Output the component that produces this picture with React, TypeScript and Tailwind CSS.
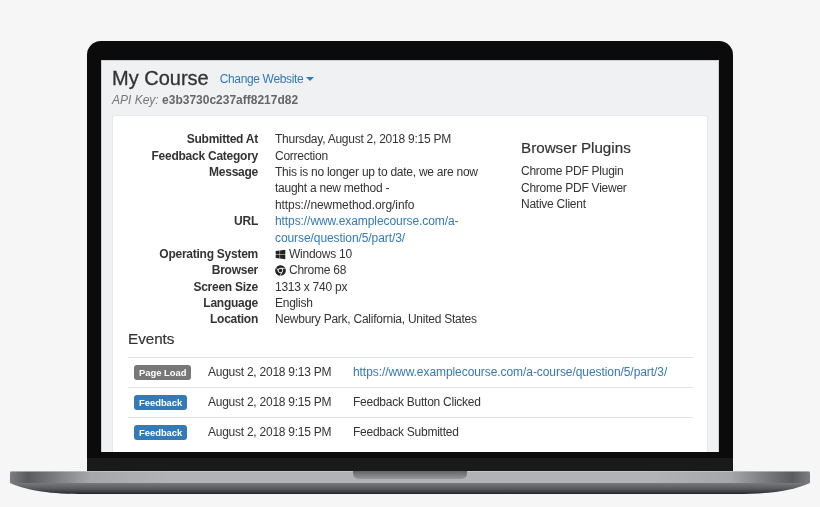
import { FaChrome, FaWindows } from 'react-icons/fa'

const details: { label: string; value: React.ReactNode }[] = [
  { label: 'Submitted At', value: 'Thursday, August 2, 2018 9:15 PM' },
  { label: 'Feedback Category', value: 'Correction' },
  {
    label: 'Message',
    value: (
      <>
        This is no longer up to date, we are now
        <br />
        taught a new method -
        <br />
        <span className="tracking-[-0.08px]">https://newmethod.org/info</span>
      </>
    ),
  },
  {
    label: 'URL',
    value: (
      <span className="tracking-[-0.08px] text-[#337ab7]">
        https://www.examplecourse.com/a-
        <br />
        course/question/5/part/3/
      </span>
    ),
  },
  {
    label: 'Operating System',
    value: (
      <span className="flex items-center gap-[3px]">
        <FaWindows className="h-[11px] w-[11px] text-[#222]" />
        Windows 10
      </span>
    ),
  },
  {
    label: 'Browser',
    value: (
      <span className="flex items-center gap-[3px]">
        <FaChrome className="h-[11px] w-[11px] text-[#222]" />
        Chrome 68
      </span>
    ),
  },
  { label: 'Screen Size', value: '1313 x 740 px' },
  { label: 'Language', value: 'English' },
  { label: 'Location', value: 'Newbury Park, California, United States' },
]

const events = [
  {
    badge: 'Page Load',
    color: 'bg-[#777777]',
    date: 'August 2, 2018 9:13 PM',
    text: <span className="tracking-[-0.07px] text-[#337ab7]">https://www.examplecourse.com/a-course/question/5/part/3/</span>,
  },
  { badge: 'Feedback', color: 'bg-[#337ab7]', date: 'August 2, 2018 9:15 PM', text: 'Feedback Button Clicked' },
  { badge: 'Feedback', color: 'bg-[#337ab7]', date: 'August 2, 2018 9:15 PM', text: 'Feedback Submitted' },
]

function LaptopBase() {
  return (
    <svg width="800" height="24" viewBox="0 0 800 24" className="block">
      <defs>
        <linearGradient id="lid" x1="0" x2="1" y1="0" y2="0">
          <stop offset="0" stopColor="#7d7e82" />
          <stop offset="0.022" stopColor="#5a5b5f" />
          <stop offset="0.05" stopColor="#75767a" />
          <stop offset="0.1" stopColor="#a6a7ab" />
          <stop offset="0.2" stopColor="#b2b3b7" />
          <stop offset="0.8" stopColor="#b2b3b7" />
          <stop offset="0.9" stopColor="#a6a7ab" />
          <stop offset="0.95" stopColor="#75767a" />
          <stop offset="0.978" stopColor="#5a5b5f" />
          <stop offset="1" stopColor="#7d7e82" />
        </linearGradient>
        <linearGradient id="under" x1="0" x2="0" y1="0" y2="1">
          <stop offset="0" stopColor="#78797d" />
          <stop offset="0.5" stopColor="#5a5b5e" />
          <stop offset="0.85" stopColor="#3a3a3d" />
          <stop offset="1" stopColor="#1d1d20" />
        </linearGradient>
        <linearGradient id="notch" x1="0" x2="0" y1="0" y2="1">
          <stop offset="0" stopColor="#636467" />
          <stop offset="1" stopColor="#96979b" />
        </linearGradient>
      </defs>
      <path d="M0 12 L800 12 C782 20 760 23 725 23 L75 23 C40 23 18 20 0 12 Z" fill="url(#under)" />
      <path d="M2 0 H798 Q800 0 800 2 V12 H0 V2 Q0 0 2 0 Z" fill="url(#lid)" />
      <rect x="0" y="0" width="800" height="1" fill="#d0d1d3" opacity="0.6" />
      <path d="M343 0 H457 V2 Q457 8 450 8 H350 Q343 8 343 2 Z" fill="url(#notch)" />
    </svg>
  )
}

export default function App() {
  return (
    <div className="flex h-[507px] w-[820px] flex-col items-center overflow-hidden bg-[#f6f6f6] pt-[41px] font-['Liberation_Sans',Arial,sans-serif] text-[12px] leading-[16.36px] tracking-[-0.25px] text-[#333] blur-[0.3px]">
      <div className="w-[646px] rounded-t-[14px] bg-[#0b0b0b] px-[14px] pt-[19px]">
        <div className="h-[392px] overflow-hidden border border-b-0 border-[#cfd0d2] bg-[#eff1f3] px-[10px]">
          <div className="flex items-center pt-[4px]">
            <h1 className="text-[20px] leading-[26px] font-normal tracking-normal text-[#333] [-webkit-text-stroke:0.3px_#333]">My Course</h1>
            <span className="mt-[3px] ml-[11px] flex items-center gap-[3px] tracking-[-0.35px] text-[#337ab7]">
              Change Website
              <span className="h-0 w-0 border-x-[4px] border-t-[4px] border-x-transparent border-t-[#337ab7]" />
            </span>
          </div>
          <div className="mt-[1px] tracking-normal text-[#777]">
            <i>API Key:</i> <b className="text-[#666]">e3b3730c237aff8217d82</b>
          </div>
          <div className="mt-[7px] h-[400px] rounded-t-[3px] border border-[#e6e7e9] bg-white px-[15px] pt-[15px]">
            <div className="flex">
              <div className="grid w-[380px] grid-cols-[130px_1fr] gap-x-[17px]">
                {details.map((row) => (
                  <div key={row.label} className="contents">
                    <div className="text-right font-bold">{row.label}</div>
                    <div>{row.value}</div>
                  </div>
                ))}
              </div>
              <div className="ml-[13px] pt-[7px]">
                <h2 className="mb-[6px] text-[15.2px] leading-[19px] font-normal tracking-normal [-webkit-text-stroke:0.2px_#333]">Browser Plugins</h2>
                <div>Chrome PDF Plugin</div>
                <div>Chrome PDF Viewer</div>
                <div>Native Client</div>
              </div>
            </div>
            <h2 className="mt-[1px] mb-[9px] text-[15.2px] leading-[19px] font-normal tracking-normal [-webkit-text-stroke:0.2px_#333]">Events</h2>
            <div className="w-[565px]">
              {events.map((ev, i) => (
                <div key={i} className="flex h-[30px] items-center border-t border-[#e3e3e3]">
                  <div className="flex w-[80px] pl-[6px]">
                    <span className={`rounded-[3px] ${ev.color} px-[5px] text-[9.4px] leading-[15px] font-bold tracking-normal text-white`}>
                      {ev.badge}
                    </span>
                  </div>
                  <div className="w-[145px]">{ev.date}</div>
                  <div>{ev.text}</div>
                </div>
              ))}
            </div>
          </div>
        </div>
        <div className="mx-[-14px] h-[6px] bg-[#0b0b0b]" />
        <div className="mx-[-14px] h-[13px] bg-[#1a1a1a]" />
      </div>
      <LaptopBase />
    </div>
  )
}
